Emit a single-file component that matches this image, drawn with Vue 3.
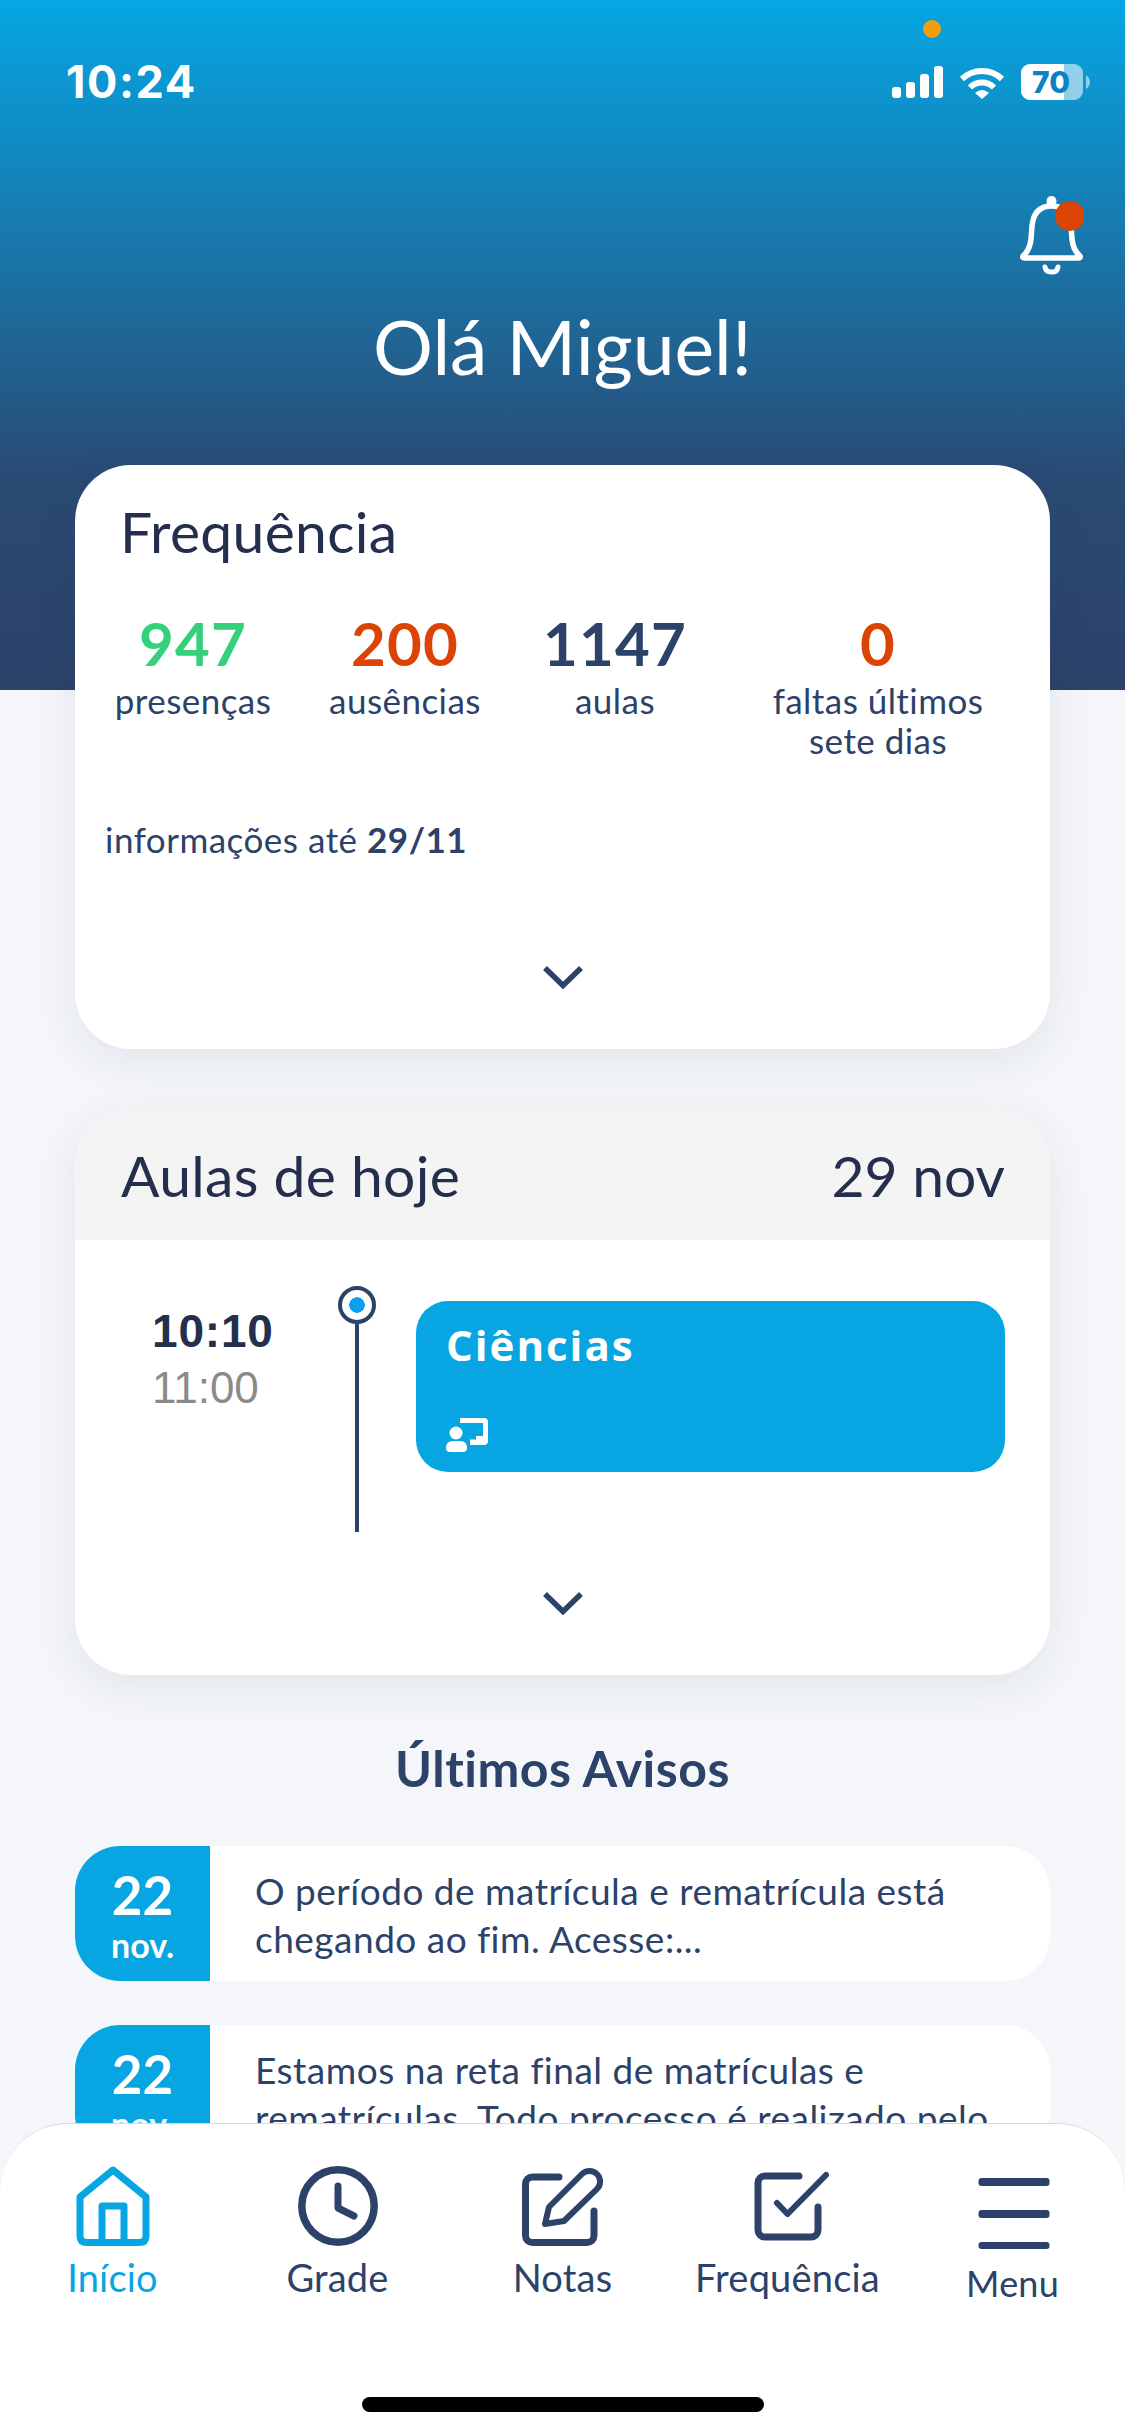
<script setup>
const stats = [
  { value: '947', label: 'presenças', tone: 'green' },
  { value: '200', label: 'ausências', tone: 'orange' },
  { value: '1147', label: 'aulas', tone: 'navy' },
  { value: '0', label: 'faltas últimos sete dias', tone: 'orange' }
]
const notices = [
  { text: 'O período de matrícula e rematrícula está chegando ao fim. Acesse:...' },
  { text: 'Estamos na reta final de matrículas e rematrículas. Todo processo é realizado pelo portal do aluno.' }
]
</script>

<template>
  <div class="page">
    <span class="mic-dot"></span>

    <header class="status">
      <span class="time">10:24</span>
      <div class="status-icons">
        <svg width="51" height="32" viewBox="0 0 51 32" fill="#fff">
          <rect x="0" y="21" width="9" height="11" rx="3" />
          <rect x="14" y="16" width="9" height="16" rx="3" />
          <rect x="28" y="8" width="9" height="24" rx="3" />
          <rect x="42" y="0" width="9" height="32" rx="3" />
        </svg>
        <svg width="46" height="33" viewBox="0 0 46 33" fill="none" stroke="#fff" stroke-width="6">
          <path d="M3 13 A29 29 0 0 1 43 13" />
          <path d="M11 21.5 A17 17 0 0 1 35 21.5" />
          <path d="M16 27 Q23 21 30 27 L23 33 Z" fill="#fff" stroke="none" />
        </svg>
        <svg width="70" height="36" viewBox="0 0 70 36">
          <rect x="0" y="0" width="62" height="36" rx="9" fill="#fff" fill-opacity="0.55" />
          <path d="M9 0 H43 V36 H9 A9 9 0 0 1 0 27 V9 A9 9 0 0 1 9 0 Z" fill="#fff" />
          <path d="M65 11 Q69 14 69 18 Q69 22 65 25 Z" fill="#fff" fill-opacity="0.55" />
          <text x="30" y="29" text-anchor="middle" class="battery-text">70</text>
        </svg>
      </div>
    </header>

    <div class="bell-row">
      <svg width="65" height="80" viewBox="0 0 65 80" fill="none" stroke="#fff" stroke-linecap="round" stroke-linejoin="round">
        <circle cx="32.5" cy="6" r="5" fill="#fff" stroke="none" />
        <path stroke-width="5.5" d="M4 61 Q11 55 12 44 L13 31 Q15 11 32.5 11 Q50 11 52 31 L53 44 Q54 55 61 61 Q62 63 59 63 H6 Q3 63 4 61 Z" />
        <path stroke-width="5" d="M26 72 Q27 77 32 77 H34 Q38 77 39 72" />
        <circle cx="51" cy="21" r="15" fill="#dc4405" stroke="none" />
      </svg>
    </div>

    <h1 class="greeting">Olá Miguel!</h1>

    <section class="card freq">
      <h2 class="card-title">Frequência</h2>
      <div class="stats">
        <div v-for="s in stats" :key="s.value" class="stat">
          <div class="stat-value" :class="s.tone">{{ s.value }}</div>
          <div class="stat-label">{{ s.label }}</div>
        </div>
      </div>
      <p class="info">informações até <b>29/11</b></p>
      <svg class="chevron freq-chevron" width="40" height="24" viewBox="0 0 40 24" fill="none" stroke="#2c4269" stroke-width="5.5">
        <path d="M2 3 L20 20.5 L38 3" />
      </svg>
    </section>

    <section class="card today">
      <div class="today-head">
        <h2 class="card-title">Aulas de hoje</h2>
        <span class="today-date">29 nov</span>
      </div>
      <div class="today-row">
        <div class="hours">
          <div class="hour-start">10:10</div>
          <div class="hour-end">11:00</div>
        </div>
        <div class="rail">
          <span class="rail-dot"></span>
          <span class="rail-line"></span>
        </div>
        <div class="lesson">
          <div class="lesson-name">Ciências</div>
          <svg class="lesson-icon" width="42" height="34" viewBox="0 0 42 34" fill="#fff">
            <path d="M14 0 H38 a4 4 0 0 1 4 4 V23 a4 4 0 0 1 -4 4 H24 V21.5 H30 V18 H37 V5 H14 Z" />
            <circle cx="10" cy="15" r="6.5" />
            <path d="M0 30 Q0 23 7 23 H14 Q21 23 21 30 Q21 34 17 34 H4 Q0 34 0 30 Z" />
          </svg>
        </div>
      </div>
      <svg class="chevron today-chevron" width="40" height="24" viewBox="0 0 40 24" fill="none" stroke="#2c4269" stroke-width="5.5">
        <path d="M2 3 L20 20.5 L38 3" />
      </svg>
    </section>

    <h2 class="notices-title">Últimos Avisos</h2>
    <div class="notices">
      <article v-for="n in notices" :key="n.text" class="notice">
        <div class="notice-date">
          <span class="notice-day">22</span>
          <span class="notice-month">nov.</span>
        </div>
        <p class="notice-text">{{ n.text }}</p>
      </article>
    </div>

    <nav class="tabbar">
      <div class="tabs">
        <div class="tab active">
          <svg width="80" height="80" viewBox="0 0 80 80" fill="none" stroke="#07a5e1" stroke-width="7" stroke-linejoin="round" stroke-linecap="round">
            <path d="M40 4 L73 31 V70 Q73 76.5 66 76.5 H14 Q7 76.5 7 70 V31 Z" />
            <path d="M29 76 V40 H51 V76" />
          </svg>
          <span class="tab-label">Início</span>
        </div>
        <div class="tab">
          <svg width="80" height="80" viewBox="0 0 80 80" fill="none" stroke="#2c4269" stroke-width="7.5" stroke-linecap="round" stroke-linejoin="round">
            <circle cx="40" cy="40" r="36.2" />
            <path stroke-width="7" d="M40 20 V42 L56 50" />
          </svg>
          <span class="tab-label">Grade</span>
        </div>
        <div class="tab">
          <svg width="80" height="80" viewBox="0 0 80 80" fill="none" stroke="#2c4269" stroke-width="7" stroke-linecap="round" stroke-linejoin="round">
            <path d="M36 11 H9.5 a7 7 0 0 0 -7 7 V69.5 a7 7 0 0 0 7 7 H64 a7 7 0 0 0 7 -7 V45" />
            <path stroke-width="6" d="M22 58 L26 41 L59 8 a10.6 10.6 0 0 1 15 15 L41 55 Z" />
          </svg>
          <span class="tab-label">Notas</span>
        </div>
        <div class="tab">
          <svg width="80" height="80" viewBox="0 0 80 80" fill="none" stroke="#2c4269" stroke-width="7" stroke-linecap="round" stroke-linejoin="round">
            <path d="M51 10 H17 a7 7 0 0 0 -7 7 V64 a7 7 0 0 0 7 7 H63 a7 7 0 0 0 7 -7 V41" />
            <path stroke-width="6" d="M29 37 L39.5 48 L78 9" />
          </svg>
          <span class="tab-label">Frequência</span>
        </div>
        <div class="tab menu">
          <svg width="80" height="80" viewBox="0 0 80 80" fill="#2c4269">
            <rect x="5.5" y="12" width="71" height="8" rx="3" />
            <rect x="5.5" y="44" width="71" height="8" rx="3" />
            <rect x="5.5" y="76" width="71" height="7" rx="3" />
          </svg>
          <span class="tab-label">Menu</span>
        </div>
      </div>
      <span class="home-indicator"></span>
    </nav>
  </div>
</template>

<style>
html, body { margin: 0; padding: 0; }
</style>

<style scoped>
.page {
  position: relative;
  width: 1125px;
  height: 2436px;
  overflow: hidden;
  font-family: Lato, "Noto Sans", sans-serif;
  color: #2c4269;
  background-color: #f4f6fa;
  background-image: linear-gradient(180deg, #06a6e3 0, #2a4a74 480px, #2c4269 690px);
  background-size: 100% 690px;
  background-repeat: no-repeat;
  display: flow-root;
}
h1, h2, p { margin: 0; font-weight: 400; }

.mic-dot {
  position: absolute;
  left: 923px;
  top: 20px;
  width: 18px;
  height: 18px;
  border-radius: 50%;
  background: #f59e0b;
}

.status {
  margin-top: 64px;
  height: 36px;
  padding: 0 34px 0 66px;
  display: flex;
  align-items: center;
  justify-content: space-between;
}
.time {
  font-family: Inter, sans-serif;
  font-weight: 700;
  font-size: 45px;
  line-height: 36px;
  letter-spacing: 1.6px;
  color: #fff;
}
.status-icons { display: flex; align-items: center; gap: 16px; }
.status-icons svg { display: block; }
.battery-text {
  font-family: Inter, sans-serif;
  font-weight: 800;
  font-size: 30px;
  fill: #0b83c2;
}

.bell-row {
  margin-top: 95px;
  padding-right: 41px;
  display: flex;
  justify-content: flex-end;
}
.bell-row svg { display: block; }

.greeting {
  margin-top: 29px;
  text-align: center;
  color: #fff;
  font-size: 75px;
  line-height: 84px;
}

.card {
  margin: 77px 75px 0;
  width: 975px;
  background: #fff;
  border-radius: 56px;
  box-shadow: 0 12px 44px rgba(40, 50, 80, 0.09);
  overflow: hidden;
}
.card-title {
  font-size: 57px;
  line-height: 64px;
  color: #232f4c;
  letter-spacing: 0.3px;
}
.chevron { display: block; margin-left: auto; margin-right: auto; }

.freq { height: 584px; padding-top: 34px; box-sizing: border-box; }
.freq .card-title { padding-left: 45px; }
.stats {
  margin-top: 45px;
  padding-left: 30px;
  display: grid;
  grid-template-columns: 176px 248px 172px 349px;
}
.stat { text-align: center; }
.stat:last-child { padding-left: 5px; }
.stat-value {
  font-size: 60px;
  font-weight: 700;
  line-height: 70px;
  letter-spacing: 1.2px;
}
.green { color: #34d07a; }
.orange { color: #dc4405; }
.navy { color: #2c4269; }
.stat-label {
  margin: 2px auto 0;
  max-width: 250px;
  font-size: 35px;
  line-height: 40px;
  letter-spacing: 0.45px;
}
.info {
  margin-top: 59px;
  padding-left: 30px;
  font-size: 35px;
  line-height: 40px;
  letter-spacing: 0.5px;
}
.info b { font-weight: 700; }
.freq-chevron { margin-top: 106px; }

.today { margin-top: 60px; height: 566px; }
.today-head {
  height: 131px;
  padding: 0 45px 0 46px;
  background: #f4f4f5;
  display: flex;
  align-items: center;
  justify-content: space-between;
}
.today-date {
  font-size: 57px;
  line-height: 64px;
  color: #232f4c;
}
.today-row {
  margin-top: 46px;
  padding-left: 77px;
  display: flex;
  align-items: flex-start;
}
.hours {
  width: 186px;
  margin-top: 19px;
  font-family: "Liberation Sans", sans-serif;
}
.hour-start {
  font-size: 46px;
  font-weight: 700;
  line-height: 52px;
  letter-spacing: 0.8px;
  color: #232f4c;
}
.hour-end {
  margin-top: 5px;
  font-size: 44px;
  line-height: 52px;
  color: #8a8a8a;
}
.rail {
  width: 38px;
  display: flex;
  flex-direction: column;
  align-items: center;
}
.rail-dot {
  width: 38px;
  height: 38px;
  box-sizing: border-box;
  border: 4px solid #2c4269;
  border-radius: 50%;
  background: radial-gradient(circle, #0a9ff0 0 7.5px, #fff 8px);
}
.rail-line {
  width: 4px;
  height: 208px;
  background: #2c4269;
}
.lesson {
  margin: 15px 0 0 40px;
  width: 589px;
  height: 171px;
  box-sizing: border-box;
  padding: 19px 31px 0 30px;
  border-radius: 32px;
  background: #07a5e1;
  color: #fff;
}
.lesson-name {
  font-family: "Open Sans", sans-serif;
  font-weight: 700;
  font-size: 42px;
  line-height: 50px;
  letter-spacing: 2px;
}
.lesson-icon { display: block; margin-top: 48px; }
.today-chevron { margin-top: 59px; }

.notices-title {
  margin-top: 64px;
  text-align: center;
  font-size: 50px;
  font-weight: 700;
  line-height: 58px;
  letter-spacing: 0.5px;
}
.notices {
  margin: 49px 75px 0;
  display: flex;
  flex-direction: column;
  gap: 44px;
}
.notice {
  height: 135px;
  display: flex;
  background: #fff;
  border-radius: 45px;
  overflow: hidden;
}
.notice-date {
  flex: 0 0 135px;
  background: #07a5e1;
  color: #fff;
  display: flex;
  flex-direction: column;
  align-items: center;
  padding-top: 21px;
  box-sizing: border-box;
}
.notice-day { font-size: 53px; font-weight: 700; line-height: 56px; }
.notice-month { font-size: 34px; font-weight: 700; line-height: 40px; margin-top: 2px; }
.notice-text {
  padding: 21px 30px 0 45px;
  font-size: 37px;
  line-height: 48px;
  letter-spacing: 0.5px;
}

.tabbar {
  position: absolute;
  left: 0;
  right: 0;
  bottom: 0;
  height: 313px;
  box-sizing: border-box;
  padding-top: 42px;
  background: #fff;
  border-top: 1px solid #d9d9d9;
  border-radius: 68px 68px 0 0;
}
.tabs { display: grid; grid-template-columns: repeat(5, 225px); }
.tab {
  display: flex;
  flex-direction: column;
  align-items: center;
}
.tab svg { display: block; overflow: visible; }
.tab-label {
  margin-top: 9px;
  font-size: 38px;
  line-height: 44px;
  letter-spacing: 0.2px;
}
.tab.active { color: #07a5e1; }
.tab.menu .tab-label { margin-top: 15px; font-size: 36px; }
.home-indicator {
  position: absolute;
  left: 362px;
  top: 273px;
  width: 402px;
  height: 15px;
  border-radius: 8px;
  background: #000;
}
</style>
